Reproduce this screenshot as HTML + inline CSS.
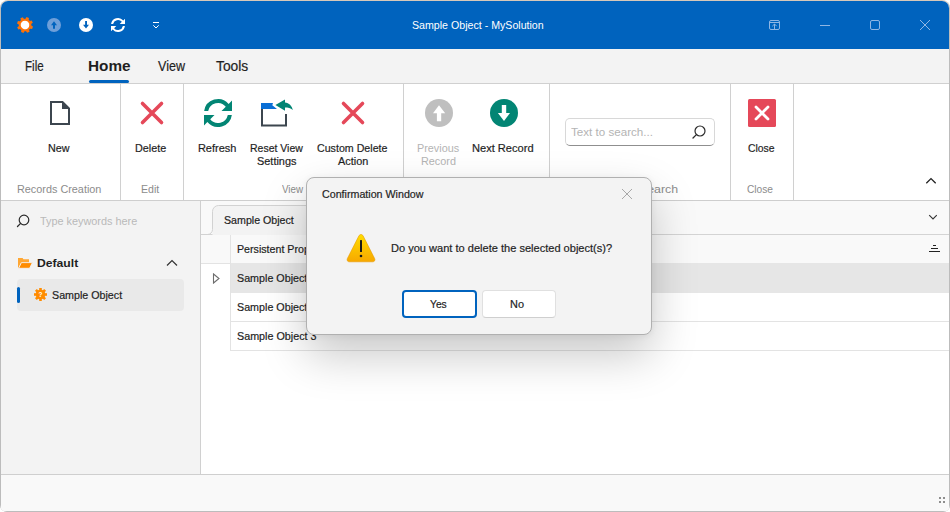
<!DOCTYPE html>
<html><head><meta charset="utf-8">
<style>
*{box-sizing:border-box;margin:0;padding:0}
html,body{width:950px;height:512px;overflow:hidden;background:#fff}
body{position:relative;font-family:"Liberation Sans",sans-serif;color:#1f1f1f}
.a{position:absolute}
.t{position:absolute;white-space:nowrap;transform-origin:0 0;}
svg.i{position:absolute;left:0;top:0;overflow:visible}
#win{position:absolute;left:0;top:0;width:950px;height:512px;border:1px solid #bcbcbc;border-top-color:#d6c8ba;border-radius:8px 8px 7px 7px;overflow:hidden;background:#fff}
.sep{position:absolute;top:84px;width:1px;height:116px;background:#d0d0d0}
</style></head><body>
<div id="win"></div>
<!-- everything below uses page coordinates -->
<div class="a" style="left:0;top:0;width:950px;height:512px;overflow:hidden;border-radius:8px 8px 7px 7px">
  <!-- title bar -->
  <div class="a" style="left:1px;top:1px;width:948px;height:48px;background:#0063be;border-radius:7px 7px 0 0"></div>
  <!-- tab header -->
  <div class="a" style="left:1px;top:49px;width:948px;height:34px;background:#f3f3f3"></div>
  <div class="a" style="left:1px;top:83px;width:948px;height:1px;background:#d0d0d0"></div>
  <div class="a" style="left:89px;top:80px;width:40px;height:3px;background:#0063be;border-radius:1.5px"></div>
  <!-- ribbon -->
  <div class="a" style="left:1px;top:200px;width:948px;height:1px;background:#cecece"></div>
  <div class="sep" style="left:120px"></div>
  <div class="sep" style="left:183px"></div>
  <div class="sep" style="left:403px"></div>
  <div class="sep" style="left:549px"></div>
  <div class="sep" style="left:730px"></div>
  <div class="sep" style="left:793px"></div>
  <!-- search box -->
  <div class="a" style="left:565px;top:118px;width:150px;height:28px;background:#fff;border:1px solid #d8d8d8;border-bottom-color:#8f8f8f;border-radius:5px"></div>
  <!-- nav panel -->
  <div class="a" style="left:1px;top:201px;width:199px;height:273px;background:#f3f3f3"></div>
  <div class="a" style="left:200px;top:201px;width:1px;height:273px;background:#d0d0d0"></div>
  <div class="a" style="left:17px;top:279px;width:167px;height:32px;background:#e9e9e9;border-radius:4px"></div>
  <div class="a" style="left:17px;top:287px;width:3px;height:16px;background:#0063be;border-radius:1.5px"></div>
  <!-- tab strip -->
  <div class="a" style="left:201px;top:201px;width:748px;height:33px;background:#f9f9f9"></div>
  <div class="a" style="left:201px;top:234px;width:748px;height:1px;background:#d4d4d4"></div>
  <!-- active tab -->
  <svg class="i" width="950" height="512"><path d="M212.5,235 V211.5 A6,6 0 0 1 218.5,205.5 H340 V235 Z" fill="#f3f3f3"/><path d="M201,234.5 H207.5 A5,5 0 0 0 212.5,229.5 V211.5 A6,6 0 0 1 218.5,205.5 H340" fill="none" stroke="#d2d2d2" stroke-width="1"/></svg>
  <!-- grid -->
  <div class="a" style="left:201px;top:235px;width:748px;height:28px;background:#f9f9f9"></div>
  <div class="a" style="left:231px;top:263px;width:718px;height:30px;background:#e6e6e6"></div>
  <div class="a" style="left:201px;top:263px;width:30px;height:1px;background:#e3e3e3"></div>
  <div class="a" style="left:231px;top:321px;width:718px;height:1px;background:#e3e3e3"></div>
  <div class="a" style="left:231px;top:350px;width:718px;height:1px;background:#e3e3e3"></div>
  <div class="a" style="left:230px;top:235px;width:1px;height:116px;background:#e3e3e3"></div>
  <!-- status bar -->
  <div class="a" style="left:1px;top:474px;width:948px;height:1px;background:#cfcfcf"></div>
  <div class="a" style="left:1px;top:475px;width:948px;height:36px;background:#f9f9f9"></div>

  <svg class="i" width="950" height="512">
    <!-- app gear -->
    <g transform="translate(25,25) rotate(20)" fill="#fd7208">
      <circle r="6.3"/>
      <path d="M-1.9,-5 L-1.3,-8 H1.3 L1.9,-5 Z"/>
      <path transform="rotate(45)" d="M-1.9,-5 L-1.3,-8 H1.3 L1.9,-5 Z"/><path transform="rotate(90)" d="M-1.9,-5 L-1.3,-8 H1.3 L1.9,-5 Z"/><path transform="rotate(135)" d="M-1.9,-5 L-1.3,-8 H1.3 L1.9,-5 Z"/>
      <path transform="rotate(180)" d="M-1.9,-5 L-1.3,-8 H1.3 L1.9,-5 Z"/><path transform="rotate(225)" d="M-1.9,-5 L-1.3,-8 H1.3 L1.9,-5 Z"/><path transform="rotate(270)" d="M-1.9,-5 L-1.3,-8 H1.3 L1.9,-5 Z"/><path transform="rotate(315)" d="M-1.9,-5 L-1.3,-8 H1.3 L1.9,-5 Z"/>
      <circle r="4.3" fill="#fff"/>
    </g>
    <!-- qat up -->
    <circle cx="54" cy="25" r="7" fill="#6e9fd9"/>
    <path d="M51,25.2 L54,21.3 L57,25.2 Z M53,25 h2 v3.8 h-2 Z" fill="#0063be"/>
    <!-- qat down -->
    <circle cx="86" cy="25" r="7" fill="#fff"/>
    <path d="M85.1,21 h1.9 v4 h-1.9 Z M83,24.8 L89,24.8 L86,28.6 Z" fill="#0063be"/>
    <!-- qat refresh -->
    <g transform="translate(111,18) scale(0.5)" fill="#fff">
      <path d="M0.14,12 A14,14 0 0 1 24.62,4.88 L28,1.5 V12 H17.5 L21.78,7.72 A10,10 0 0 0 4.2,12 Z M27.86,16 A14,14 0 0 1 3.38,23.12 L0,26.5 V16 H10.5 L6.22,20.28 A10,10 0 0 0 23.8,16 Z"/>
    </g>
    <!-- qat customize -->
    <path d="M153,22.5 h6 M153.3,25.3 L156,28 L158.7,25.3" stroke="#fff" stroke-width="1" fill="none"/>
    <!-- window controls -->
    <g stroke="#8fb6e4" stroke-width="1" fill="none">
      <rect x="769.5" y="20.5" width="10" height="9" rx="1.5"/>
      <path d="M769.5,22.5 h10 M774.5,24 v6 M772.3,26.2 L774.5,24 L776.7,26.2"/>
      <path d="M820,25.5 h10"/>
      <rect x="870.5" y="20.5" width="9" height="9" rx="1.5"/>
      <path d="M920,20 L930,30 M930,20 L920,30"/>
    </g>

    <!-- New doc icon -->
    <path d="M51,102 H62.5 L69,108.5 V124 H51 Z" fill="none" stroke="#3c464f" stroke-width="2" stroke-linejoin="miter"/>
    <path d="M62,101 V109 H70 Z" fill="#3c464f"/>
    <!-- Delete X -->
    <path d="M142.5,103.5 L161.5,122.5 M161.5,103.5 L142.5,122.5" stroke="#e54859" stroke-width="3.6" stroke-linecap="round"/>
    <!-- Refresh teal -->
    <g transform="translate(204,99)" fill="#028574"><path d="M0.14,12 A14,14 0 0 1 24.62,4.88 L28,1.5 V12 H17.5 L21.78,7.72 A10,10 0 0 0 4.2,12 Z M27.86,16 A14,14 0 0 1 3.38,23.12 L0,26.5 V16 H10.5 L6.22,20.28 A10,10 0 0 0 23.8,16 Z"/></g>
    <!-- Reset view settings -->
    <path d="M262,109 V125.5 H286 V114" fill="none" stroke="#3c464f" stroke-width="2"/>
    <path d="M261,103 H273 L272.3,105.3 L277,109 H261 Z" fill="#0a6fd6"/>
    <path d="M275.4,105 L285,99.4 V102.6 C289,103 292,106 292.8,110 C290.5,108 288,107.5 285,107.5 V110.8 Z" fill="#028574"/>
    <!-- Custom delete X -->
    <path d="M343.5,103.5 L362.5,122.5 M362.5,103.5 L343.5,122.5" stroke="#e54859" stroke-width="3.6" stroke-linecap="round"/>
    <!-- Prev -->
    <circle cx="439" cy="113" r="14" fill="#bfbfbf"/>
    <path d="M433,113.2 L439,105.2 L445.2,113.2 Z M436.9,113 h4.3 v8.3 h-4.3 Z" fill="#fff"/>
    <!-- Next -->
    <circle cx="504" cy="113" r="14" fill="#028574"/>
    <path d="M501.8,105 h4.4 v8.2 h-4.4 Z M497.9,113 L510,113 L504,121 Z" fill="#fff"/>
    <!-- search icon in box -->
    <circle cx="700" cy="131" r="5" fill="none" stroke="#2b2b2b" stroke-width="1.2"/>
    <path d="M696.4,134.6 L693,138" stroke="#2b2b2b" stroke-width="1.3" stroke-linecap="round"/>
    <!-- Close -->
    <rect x="748" y="99" width="28" height="28" rx="1.5" fill="#e54859"/>
    <path d="M756,107 L768,119 M768,107 L756,119" stroke="#fff" stroke-width="2.8" stroke-linecap="round"/>
    <!-- ribbon collapse -->
    <path d="M926.3,183.3 L931,178.6 L935.7,183.3" fill="none" stroke="#222" stroke-width="1.3"/>
    <!-- tab strip chevron -->
    <path d="M929.2,215.2 L933,219 L936.8,215.2" fill="none" stroke="#333" stroke-width="1.1"/>
    <!-- header column chooser -->
    <path d="M933,245.5 h3 M931,248.5 h7 M929,251.5 h11" stroke="#222" stroke-width="1"/>
    <!-- row indicator -->
    <path d="M213.5,274 L219,278.5 L213.5,283 Z" fill="none" stroke="#6e6e6e" stroke-width="1.1"/>
    <!-- nav search -->
    <circle cx="24" cy="220" r="4.8" fill="none" stroke="#2b2b2b" stroke-width="1.2"/>
    <path d="M20.6,223.4 L17.5,226.5" stroke="#2b2b2b" stroke-width="1.3" stroke-linecap="round"/>
    <!-- folder -->
    <path d="M18,258 H22.6 L23.4,259.3 H29 V263 H21 L18.4,268 H18 Z" fill="#ffa733"/>
    <path d="M21.4,262.6 H32.4 L29.6,268.3 H18.6 Z" fill="#ff8c00" stroke="#f3f3f3" stroke-width="0.9"/>
    <!-- nav chevron -->
    <path d="M167,265.5 L172,260.5 L177,265.5" fill="none" stroke="#333" stroke-width="1.2"/>
    <!-- nav gear -->
    <g transform="translate(40.5,294.5)" fill="#ff8c00">
      <circle r="4.8"/>
      <rect x="-1.3" y="-6.5" width="2.6" height="2.6"/>
      <rect transform="rotate(45)" x="-1.3" y="-6.5" width="2.6" height="2.6"/><rect transform="rotate(90)" x="-1.3" y="-6.5" width="2.6" height="2.6"/><rect transform="rotate(135)" x="-1.3" y="-6.5" width="2.6" height="2.6"/>
      <rect transform="rotate(180)" x="-1.3" y="-6.5" width="2.6" height="2.6"/><rect transform="rotate(225)" x="-1.3" y="-6.5" width="2.6" height="2.6"/><rect transform="rotate(270)" x="-1.3" y="-6.5" width="2.6" height="2.6"/><rect transform="rotate(315)" x="-1.3" y="-6.5" width="2.6" height="2.6"/>
    </g>
    <text x="40.5" y="296.8" font-family="Liberation Sans" font-size="6.5" font-weight="700" fill="#fff" text-anchor="middle">?</text>
    <!-- resize grip -->
    <g fill="#8e8e8e"><rect x="939" y="497" width="2" height="2"/><rect x="943" y="497" width="2" height="2"/><rect x="939" y="501" width="2" height="2"/><rect x="943" y="501" width="2" height="2"/></g>
  </svg>

<div class="t" style="left:411.83px;top:20.00px;font-size:11px;line-height:11px;font-weight:400;color:#ffffff;transform:scaleX(0.9659);-webkit-text-stroke:0">Sample Object - MySolution</div>
<div class="t" style="left:24.97px;top:59.00px;font-size:14px;line-height:14px;font-weight:400;color:#1f1f1f;transform:scaleX(0.8286);-webkit-text-stroke:0.2px currentColor;">File</div>
<div class="t" style="left:87.51px;top:59.00px;font-size:14px;line-height:14px;font-weight:700;color:#1f1f1f;transform:scaleX(1.0946);">Home</div>
<div class="t" style="left:157.60px;top:59.00px;font-size:14px;line-height:14px;font-weight:400;color:#1f1f1f;transform:scaleX(0.8967);-webkit-text-stroke:0.2px currentColor;">View</div>
<div class="t" style="left:216.00px;top:59.00px;font-size:14px;line-height:14px;font-weight:400;color:#1f1f1f;transform:scaleX(0.9875);-webkit-text-stroke:0.2px currentColor;">Tools</div>
<div class="t" style="left:47.52px;top:143.00px;font-size:11px;line-height:11px;font-weight:400;color:#1f1f1f;transform:scaleX(0.9762);-webkit-text-stroke:0.2px currentColor;">New</div>
<div class="t" style="left:134.72px;top:143.00px;font-size:11px;line-height:11px;font-weight:400;color:#1f1f1f;transform:scaleX(0.9806);-webkit-text-stroke:0.2px currentColor;">Delete</div>
<div class="t" style="left:197.90px;top:143.00px;font-size:11px;line-height:11px;font-weight:400;color:#1f1f1f;transform:scaleX(1.0000);-webkit-text-stroke:0.2px currentColor;">Refresh</div>
<div class="t" style="left:249.85px;top:143.00px;font-size:11px;line-height:11px;font-weight:400;color:#1f1f1f;transform:scaleX(0.9527);-webkit-text-stroke:0.2px currentColor;">Reset View</div>
<div class="t" style="left:256.71px;top:156.00px;font-size:11px;line-height:11px;font-weight:400;color:#1f1f1f;transform:scaleX(0.9923);-webkit-text-stroke:0.2px currentColor;">Settings</div>
<div class="t" style="left:316.53px;top:143.00px;font-size:11px;line-height:11px;font-weight:400;color:#1f1f1f;transform:scaleX(0.9681);-webkit-text-stroke:0.2px currentColor;">Custom Delete</div>
<div class="t" style="left:337.50px;top:156.00px;font-size:11px;line-height:11px;font-weight:400;color:#1f1f1f;transform:scaleX(0.9900);-webkit-text-stroke:0.2px currentColor;">Action</div>
<div class="t" style="left:417.01px;top:143.00px;font-size:11px;line-height:11px;font-weight:400;color:#b4b4b4;transform:scaleX(0.9857);">Previous</div>
<div class="t" style="left:420.51px;top:156.00px;font-size:11px;line-height:11px;font-weight:400;color:#b4b4b4;transform:scaleX(0.9853);">Record</div>
<div class="t" style="left:471.99px;top:143.00px;font-size:11px;line-height:11px;font-weight:400;color:#1f1f1f;transform:scaleX(1.0067);-webkit-text-stroke:0.2px currentColor;">Next Record</div>
<div class="t" style="left:747.76px;top:143.00px;font-size:11px;line-height:11px;font-weight:400;color:#1f1f1f;transform:scaleX(0.9444);-webkit-text-stroke:0.2px currentColor;">Close</div>
<div class="t" style="left:16.51px;top:184.00px;font-size:11px;line-height:11px;font-weight:400;color:#8c8c8c;transform:scaleX(0.9857);">Records Creation</div>
<div class="t" style="left:140.54px;top:184.00px;font-size:11px;line-height:11px;font-weight:400;color:#8c8c8c;transform:scaleX(0.9611);">Edit</div>
<div class="t" style="left:281.80px;top:184.00px;font-size:11px;line-height:11px;font-weight:400;color:#8c8c8c;transform:scaleX(0.8917);">View</div>
<div class="t" style="left:639.38px;top:184.00px;font-size:11px;line-height:11px;font-weight:400;color:#8c8c8c;transform:scaleX(1.1212);">Search</div>
<div class="t" style="left:747.07px;top:184.00px;font-size:11px;line-height:11px;font-weight:400;color:#8c8c8c;transform:scaleX(0.9259);">Close</div>
<div class="t" style="left:571.00px;top:127.00px;font-size:11px;line-height:11px;font-weight:400;color:#b4b4b4;transform:scaleX(1.0558);">Text to search...</div>
<div class="t" style="left:40.10px;top:216.00px;font-size:11px;line-height:11px;font-weight:400;color:#b9b9b9;transform:scaleX(0.9878);">Type keywords here</div>
<div class="t" style="left:36.74px;top:258.00px;font-size:11.5px;line-height:11.5px;font-weight:700;color:#1f1f1f;transform:scaleX(1.0579);">Default</div>
<div class="t" style="left:51.63px;top:290.00px;font-size:11px;line-height:11px;font-weight:400;color:#1f1f1f;transform:scaleX(0.9718);-webkit-text-stroke:0.2px currentColor;">Sample Object</div>
<div class="t" style="left:224.03px;top:215.00px;font-size:11px;line-height:11px;font-weight:400;color:#1f1f1f;transform:scaleX(0.9676);-webkit-text-stroke:0.2px currentColor;">Sample Object</div>
<div class="t" style="left:237.33px;top:244.00px;font-size:11px;line-height:11px;font-weight:400;color:#1f1f1f;transform:scaleX(0.9688);-webkit-text-stroke:0.2px currentColor;">Persistent Property</div>
<div class="t" style="left:237.33px;top:272.50px;font-size:11px;line-height:11px;font-weight:400;color:#1f1f1f;transform:scaleX(0.9750);-webkit-text-stroke:0.2px currentColor;">Sample Object 1</div>
<div class="t" style="left:237.33px;top:301.50px;font-size:11px;line-height:11px;font-weight:400;color:#1f1f1f;transform:scaleX(0.9750);-webkit-text-stroke:0.2px currentColor;">Sample Object 2</div>
<div class="t" style="left:237.12px;top:330.50px;font-size:11px;line-height:11px;font-weight:400;color:#1f1f1f;transform:scaleX(0.9775);-webkit-text-stroke:0.2px currentColor;">Sample Object 3</div>

  <!-- dialog -->
  <div class="a" style="left:306px;top:177px;width:346px;height:158px;background:#f3f3f3;border:1px solid #b0b0b0;border-radius:8px;box-shadow:0 20px 46px rgba(0,0,0,0.22),0 1px 6px rgba(0,0,0,0.06)"></div>
  <div class="a" style="left:402px;top:290px;width:75px;height:28px;background:#fff;border:2px solid #0063be;border-radius:4px"></div>
  <div class="a" style="left:482px;top:290px;width:74px;height:28px;background:#fff;border:1px solid #e0e0e0;border-bottom-color:#cfcfcf;border-radius:4px"></div>
  <svg class="i" width="950" height="512">
    <path d="M622,189 L632,199 M632,189 L622,199" stroke="#a8a8a8" stroke-width="1"/>
    <defs><linearGradient id="wg" x1="0" y1="0" x2="0" y2="1"><stop offset="0" stop-color="#ffdd00"/><stop offset="1" stop-color="#f7a800"/></linearGradient></defs>
    <path d="M361,234.5 C362,234.5 362.6,235 363.2,236 L374.6,258.5 C375.4,260.2 374.6,261.8 372.6,261.8 H349.4 C347.4,261.8 346.6,260.2 347.4,258.5 L358.8,236 C359.4,235 360,234.5 361,234.5 Z" fill="url(#wg)" stroke="#e89a00" stroke-width="0.6"/>
    <rect x="360" y="240" width="2" height="12" rx="0.5" fill="#1a1a1a"/>
    <circle cx="361" cy="256" r="1.3" fill="#1a1a1a"/>
  </svg>
<div class="t" style="left:321.83px;top:189.00px;font-size:11px;line-height:11px;font-weight:400;color:#1f1f1f;transform:scaleX(0.9712);-webkit-text-stroke:0.2px currentColor;">Confirmation Window</div>
<div class="t" style="left:391.00px;top:243.00px;font-size:11px;line-height:11px;font-weight:400;color:#1f1f1f;transform:scaleX(1.0046);-webkit-text-stroke:0.2px currentColor;">Do you want to delete the selected object(s)?</div>
<div class="t" style="left:430.40px;top:299.00px;font-size:11px;line-height:11px;font-weight:400;color:#1f1f1f;transform:scaleX(0.9333);-webkit-text-stroke:0.2px currentColor;">Yes</div>
<div class="t" style="left:510.31px;top:299.00px;font-size:11px;line-height:11px;font-weight:400;color:#1f1f1f;transform:scaleX(0.9923);-webkit-text-stroke:0.2px currentColor;">No</div>
</div>
</body></html>
